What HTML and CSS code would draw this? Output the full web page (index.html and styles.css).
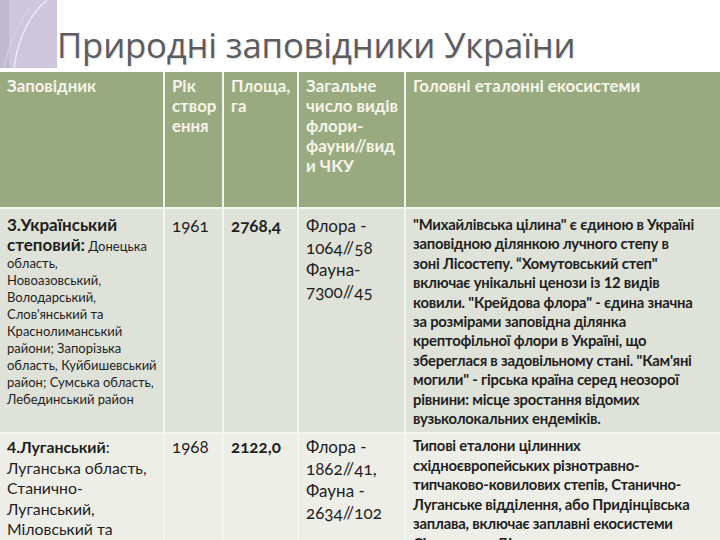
FILE: index.html
```html
<!DOCTYPE html>
<html lang="uk">
<head>
<meta charset="utf-8">
<title>Природні заповідники України</title>
<link rel="stylesheet" href="styles.css">
</head>
<body>
<div class="slide">
  <header class="title-bar">
    <svg class="deco" width="57" height="68" viewBox="0 0 57 68" aria-hidden="true">
      <rect x="0" y="0" width="57" height="68" fill="#cdc6dc"/>
      <rect x="0" y="0" width="9" height="68" fill="#c1b9d2"/>
      <path d="M14 68 C 18 38, 30 14, 47 0" fill="none" stroke="#ede9f4" stroke-width="1.6"/>
      <path d="M4 68 C 8 46, 18 24, 30 8" fill="none" stroke="#dad4e7" stroke-width="1"/>
    </svg>
    <h1 class="title">Природні заповідники України</h1>
  </header>
  <table class="reserves">
    <colgroup>
      <col class="c1"><col class="c2"><col class="c3"><col class="c4"><col class="c5">
    </colgroup>
    <thead>
      <tr class="head">
        <th>Заповідник</th>
        <th>Рік<br>створ<br>ення</th>
        <th>Площа,<br>га</th>
        <th>Загальне<br>число видів<br>флори-<br>фауни//вид<br>и ЧКУ</th>
        <th>Головні еталонні екосистеми</th>
      </tr>
    </thead>
    <tbody>
      <tr class="row-a">
        <td class="name"><b class="big">3.Український<br>степовий:</b> Донецька<br>область,<br>Новоазовський,<br>Володарський,<br>Слов'янський та<br>Краснолиманський<br>райони; Запорізька<br>область, Куйбишевський<br>район; Сумська область,<br>Лебединський район</td>
        <td class="num">1961</td>
        <td class="num"><b>2768,4</b></td>
        <td class="num species">Флора -<br>1064//58<br>Фауна-<br>7300//45</td>
        <td class="eco">"Михайлівська цілина" є єдиною в Україні<br>заповідною ділянкою лучного степу в<br>зоні Лісостепу. “Хомутовський степ"<br>включає унікальні ценози із 12 видів<br>ковили. "Крейдова флора" - єдина значна<br>за розмірами заповідна ділянка<br>крептофільної флори в Україні, що<br>збереглася в задовільному стані. "Кам'яні<br>могили" - гірська країна серед неозорої<br>рівнини: місце зростання відомих<br>вузьколокальних ендеміків.</td>
      </tr>
      <tr class="row-b">
        <td class="name reg"><b>4.Луганський</b>:<br>Луганська область,<br>Станично-<br>Луганський,<br>Міловський та</td>
        <td class="num">1968</td>
        <td class="num"><b>2122,0</b></td>
        <td class="num species">Флора -<br>1862//41,<br>Фауна -<br>2634//102</td>
        <td class="eco">Типові еталони цілинних<br>східноєвропейських різнотравно-<br>типчаково-ковилових степів, Станично-<br>Луганське відділення, або Придінцівська<br>заплава, включає заплавні екосистеми<br>Сіверського Дінця</td>
      </tr>
    </tbody>
  </table>
</div>
</body>
</html>
```
FILE: styles.css
```css
html, body {
  margin: 0;
  padding: 0;
  background: #ffffff;
}
body {
  width: 720px;
  height: 540px;
  overflow: hidden;
  font-family: Lato, "Open Sans", sans-serif;
  color: #1e1e1e;
}
.slide {
  width: 720px;
}
.title-bar {
  display: flex;
  align-items: flex-end;
  height: 68px;
  margin-bottom: 4px;
}
.deco {
  display: block;
  flex: none;
}
.title {
  margin: 0 0 2px 0;
  font-family: "Open Sans", Lato, sans-serif;
  font-weight: 400;
  font-size: 34.6px;
  line-height: 42px;
  color: #5c5c60;
  letter-spacing: -0.1px;
  text-shadow: 1px 1px 1px rgba(0,0,0,0.12);
  white-space: nowrap;
}
.reserves {
  border-collapse: collapse;
  table-layout: fixed;
  width: 720px;
}
.c1 { width: 164px; }
.c2 { width: 59px; }
.c3 { width: 75px; }
.c4 { width: 107px; }
.c5 { width: 315px; }
.reserves th,
.reserves td {
  vertical-align: top;
  text-align: left;
  border-left: 2px solid #f3f5ef;
  border-bottom: 2px solid #f3f5ef;
  padding: 4px 4px 0 7px;
  white-space: nowrap;
  overflow: hidden;
}
.reserves th:first-child,
.reserves td:first-child {
  border-left: none;
}
.head {
  height: 136px;
  background: #9aaa80;
}
.head th {
  font-weight: 700;
  font-size: 16.8px;
  line-height: 20px;
  color: #f5f5ea;
  padding-top: 4px;
}
.row-a {
  height: 225px;
  background: #dee2d8;
}
.row-b {
  background: #eeeee9;
}
.row-a td { padding-top: 6px; }
.row-b td { padding-top: 2px; }
.row-b td.name { padding-top: 3px; }
.name {
  font-size: 13px;
  line-height: 17px;
}
.name .big {
  font-size: 17px;
  line-height: 20px;
}
.name.reg {
  font-size: 15.8px;
  line-height: 20.5px;
}
.num {
  font-size: 17px;
  line-height: 22px;
  font-variant-numeric: oldstyle-nums;
}
.eco {
  font-weight: 700;
  font-size: 14.8px;
  line-height: 19.4px;
  letter-spacing: -0.2px;
}
.row-b .eco {
  line-height: 19.5px;
}
```
